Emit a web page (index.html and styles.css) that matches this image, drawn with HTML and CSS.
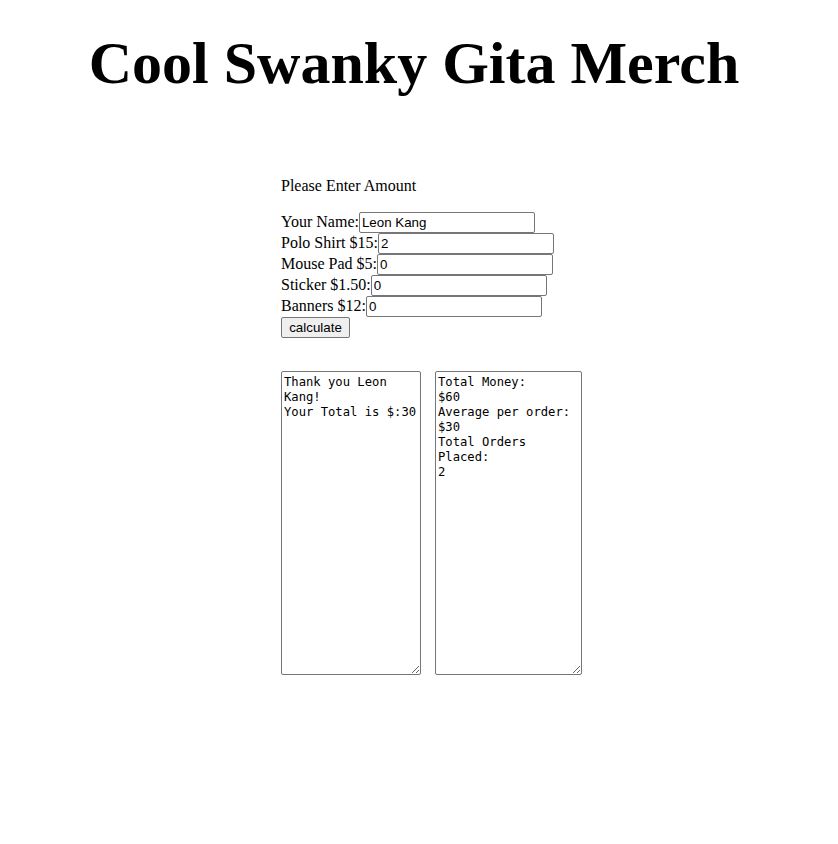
FILE: index.html
```html
<!DOCTYPE html>
<html>
<head>
<meta charset="utf-8">
<title>Cool Swanky Gita Merch</title>
<link rel="stylesheet" href="styles.css">
</head>
<body>
<h1 class="title">Cool Swanky Gita Merch</h1>
<div class="order">
  <p class="prompt">Please Enter Amount</p>
  <form class="form">
    <div class="row"><label>Your Name:</label><input class="field" type="text" value="Leon Kang"></div>
    <div class="row"><label>Polo Shirt $15:</label><input class="field" type="text" value="2"></div>
    <div class="row"><label>Mouse Pad $5:</label><input class="field" type="text" value="0"></div>
    <div class="row"><label>Sticker $1.50:</label><input class="field" type="text" value="0"></div>
    <div class="row"><label>Banners $12:</label><input class="field" type="text" value="0"></div>
    <div class="row"><button class="calc" type="button">calculate</button></div>
  </form>
  <div class="outputs">
    <textarea class="out out-left">Thank you Leon
Kang!
Your Total is $:30</textarea>
    <textarea class="out out-right">Total Money:
$60
Average per order:
$30
Total Orders
Placed:
2</textarea>
  </div>
</div>
</body>
</html>
```
FILE: styles.css
```css
html, body {
  background: #ffffff;
}
body {
  margin: 8px;
  font-family: "Liberation Serif", "Times New Roman", serif;
  font-size: 16px;
  color: #000;
}
.title {
  margin: 21px 0 0;
  padding-right: 10px;
  text-align: center;
  font-size: 60px;
  font-weight: bold;
  line-height: 69px;
}
.order {
  width: 276px;
  margin: 0 auto;
}
.prompt {
  margin: 79px 0 0;
  line-height: 18px;
}
.form {
  margin-top: 17px;
  display: flex;
  flex-direction: column;
}
.row {
  display: flex;
  align-items: baseline;
  height: 21px;
  white-space: nowrap;
}
.row label {
  line-height: 18px;
}
.field {
  box-sizing: border-box;
  width: 176px;
  height: 21px;
  margin: 0;
  padding: 1px 2px;
  border: 1px solid #767676;
  border-radius: 2px;
  font-family: "Liberation Sans", Arial, sans-serif;
  font-size: 13.33px;
  color: #000;
  background: #fff;
}
.calc {
  box-sizing: border-box;
  width: 69px;
  height: 21px;
  margin: 0;
  padding: 1px 6px;
  border: 1px solid #767676;
  border-radius: 2px;
  background: #efefef;
  font-family: "Liberation Sans", Arial, sans-serif;
  font-size: 13.33px;
  color: #000;
}
.outputs {
  margin-top: 33px;
  display: flex;
  gap: 14px;
  width: 320px;
}
.out {
  box-sizing: border-box;
  height: 304px;
  margin: 0;
  padding: 3px 2px 2px;
  border: 1px solid #767676;
  border-radius: 2px;
  font-family: "DejaVu Sans Mono", Consolas, monospace;
  font-size: 12.2px;
  line-height: 15px;
  color: #000;
  background: #fff;
  overflow: hidden;
  flex: none;
}
.out-left {
  width: 140px;
}
.out-right {
  width: 147px;
}
```
